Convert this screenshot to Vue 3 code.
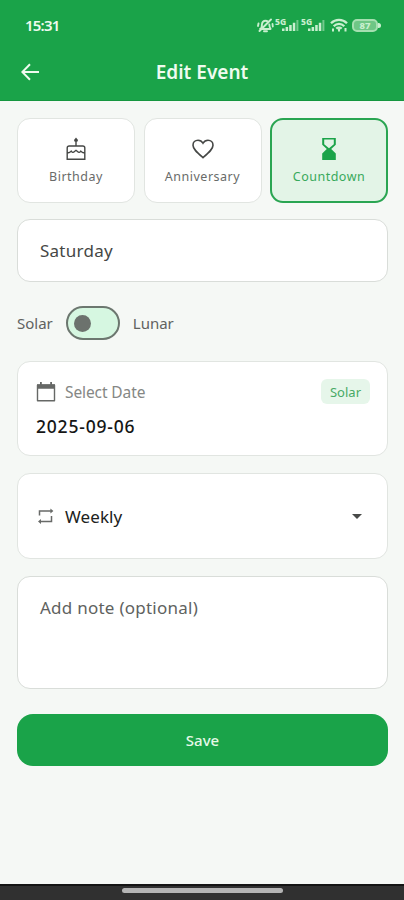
<script setup>
import { ref } from 'vue'

const types = ['Birthday', 'Anniversary', 'Countdown']
const selected = ref('Countdown')
const signals = [0, 1]
</script>

<template>
  <div class="screen">
    <header class="top">
      <div class="status">
        <span class="clock">15:31</span>
        <div class="indicators">
          <svg class="bell" width="17" height="15" viewBox="0 0 17 15" fill="none" stroke="currentColor" stroke-width="1.9" stroke-linecap="round">
            <path d="M3 11h10.500M4 10.500c1-1 .8-2.600.9-4C5.200 4 6.500 2.700 8.500 2.700c1 0 1.700.3 2.300.8M12.300 6.500c.1 1.800.2 3 1.200 4M7 13.200h3M14 1.500 2.500 13M1.500 5.500 1 8M15.500 6l.3 2.500" />
          </svg>
          <div v-for="s in signals" :key="s" class="signal">
            <span class="gen">5G</span>
            <svg width="17" height="11" viewBox="0 0 17 11" fill="currentColor">
              <path d="M0 8.500h2.500V11H0zM3.600 7h2.500v4H3.600zM7.200 5h2.500v6H7.200zM10.800 2.700h2.500V11h-2.500z" />
              <path d="M14.400 0h2v11h-2z" opacity=".5" />
            </svg>
          </div>
          <svg class="wifi" width="18" height="14" viewBox="0 0 18 14" fill="none" stroke="currentColor" stroke-width="2.300">
            <path d="M1 5.200c4.500-4.500 11.500-4.500 16 0M3.700 8.200c3-3 7.600-3 10.600 0M6.300 10.700c1.500-1.400 3.900-1.400 5.400 0" />
            <path d="M9 10.500v3M3 10.500V13.500M15.500 10v3.500" stroke-width="2" />
          </svg>
          <div class="battery"><span>87</span></div>
        </div>
      </div>
      <div class="appbar">
        <svg class="back" width="18" height="18" viewBox="0 0 18 18" fill="none" stroke="currentColor" stroke-width="2">
          <path d="M18 9H2M9 1.200 1.300 9 9 16.800" />
        </svg>
        <h1>Edit Event</h1>
      </div>
    </header>

    <main>
      <div class="types">
        <button v-for="t in types" :key="t" class="card type" :class="{ active: t === selected }" @click="selected = t">
          <svg v-if="t === 'Birthday'" width="20" height="24" viewBox="0 0 20 24" fill="none" stroke="currentColor" stroke-width="1.400">
            <path d="M10 4.500V9M1.200 22.200V11q0-2 2-2h13.600q2 0 2 2v11.200zM1.200 15.500c1.800 1 3-.3 4-1.400 1 1.200 2 1.800 3 .7L10 13.300l1.800 1.500c1 1.100 2 .5 3-.7 1 1.100 2.200 2.400 4 1.400" />
            <path d="M10 .4 12 3A2 2 0 1 1 8 3z" fill="currentColor" stroke="none" />
          </svg>
          <svg v-else-if="t === 'Anniversary'" width="24" height="24" viewBox="0 0 24 24" fill="none" stroke="currentColor" stroke-width="1.600">
            <path d="M12 20.600C5.800 15.200 2 12 2 8.200 2 5.400 4.200 3.200 7 3.200c2 0 3.900 1.100 5 3 1.100-1.900 3-3 5-3 2.800 0 5 2.200 5 5 0 3.800-3.800 7-10 12.400z" />
          </svg>
          <svg v-else width="24" height="24" viewBox="0 0 24 24" fill="currentColor">
            <path d="M5.200 1h13.600v6.800L14.200 12l4.600 4.500V23H5.200v-6.500L9.800 12 5.200 7.800zm2 1.600v4.600L12 11.300l4.800-4.100V2.600z" fill-rule="evenodd" />
          </svg>
          <span>{{ t }}</span>
        </button>
      </div>

      <div class="card field title">Saturday</div>

      <div class="calendar">
        <span>Solar</span>
        <div class="switch"><i></i></div>
        <span>Lunar</span>
      </div>

      <div class="card date">
        <div class="date-head">
          <svg width="20" height="20" viewBox="0 0 20 20" fill="none" stroke="currentColor" stroke-width="1.400">
            <path d="M1.500 3.200h17v15.600h-17z" stroke-linejoin="round" />
            <path d="M1 2.200h18v4.600H1zM4 0h1.800v3H4zM14.200 0H16v3h-1.800z" fill="currentColor" stroke="none" />
          </svg>
          <span class="label">Select Date</span>
          <span class="tag">Solar</span>
        </div>
        <div class="value">2025-09-06</div>
      </div>

      <div class="card repeat">
        <svg width="18" height="18" viewBox="0 0 18 18" fill="none" stroke="currentColor" stroke-width="1.500">
          <path d="M2.500 8.500V4H14.500M14.500 9v5.500H3" />
          <path d="M13.400 1.500l3 2.500-3 2.500zM4 12l-3 2.500 3 2.500z" fill="currentColor" stroke="none" />
        </svg>
        <span>Weekly</span>
        <svg class="caret" width="10" height="5" viewBox="0 0 10 5" fill="currentColor"><path d="M0 0h10L5 5z" /></svg>
      </div>

      <div class="card field note">Add note (optional)</div>

      <button class="save">Save</button>
    </main>

    <footer><i></i></footer>
  </div>
</template>

<style>
body {
  margin: 0;
}
</style>

<style scoped>
.screen {
  box-sizing: border-box;
  width: 404px;
  height: 900px;
  display: flex;
  flex-direction: column;
  overflow: hidden;
  background: #f5f8f5;
  color: #454745;
  font-family: "Noto Sans", sans-serif;
}
.screen * {
  box-sizing: border-box;
}
svg {
  display: block;
  flex: none;
}
button {
  font: inherit;
  color: inherit;
  padding: 0;
}
.top {
  height: 101px;
  flex: none;
  background: #1aa349;
  color: #effbef;
  border-bottom: 1px solid #15963f;
}
.status {
  height: 50px;
  padding: 0 24px 0 25px;
  display: flex;
  align-items: center;
  justify-content: space-between;
}
.clock {
  font-size: 15px;
  font-weight: 600;
  letter-spacing: -0.8px;
}
.indicators {
  display: flex;
  align-items: center;
  color: #c9efcf;
}
.signal {
  width: 26px;
  height: 14px;
  display: flex;
  align-items: flex-end;
  justify-content: flex-end;
  position: relative;
  padding-bottom: 1px;
}
.signal + .wifi {
  margin-left: 5px;
}
.bell {
  margin-right: -1px;
}
.gen {
  position: absolute;
  left: 2px;
  top: -1px;
  font-size: 8.500px;
  line-height: 9px;
  font-weight: 800;
}
.battery {
  width: 26px;
  height: 13px;
  margin-left: 4px;
  margin-right: 2px;
  border: 2px solid #a5dfb0;
  border-radius: 5px;
  background: #6ec685;
  display: flex;
  align-items: center;
  justify-content: center;
  font-size: 9.500px;
  line-height: 9px;
  font-weight: 800;
  position: relative;
}
.battery::after {
  content: "";
  position: absolute;
  right: -5px;
  top: 2px;
  width: 3px;
  height: 5px;
  border-radius: 0 3px 3px 0;
  background: #c9efcf;
}
.appbar {
  height: 43px;
  padding: 0 21px;
  display: grid;
  grid-template-columns: 18px 1fr 18px;
  align-items: center;
}
h1 {
  margin: 0;
  text-align: center;
  font-size: 19px;
  line-height: 26px;
  font-weight: 600;
  letter-spacing: 0;
}
main {
  flex: 1;
  padding: 17px 16px 0 17px;
  display: flex;
  flex-direction: column;
}
.card {
  background: #fff;
  border: 1px solid #e1e5e1;
  border-radius: 13px;
  flex: none;
}
.types {
  display: grid;
  grid-template-columns: repeat(3, 118px);
  justify-content: space-between;
}
.type {
  height: 85px;
  display: flex;
  flex-direction: column;
  align-items: center;
  justify-content: center;
  font-size: 12.500px;
  line-height: 18px;
  letter-spacing: 0.5px;
  color: #696b69;
}
.type svg {
  height: 24px;
  margin: 2px 0 7px;
  color: #454745;
}
.type.active {
  background: #e3f4e7;
  border: 2px solid #2aa552;
  color: #38a95b;
}
.type.active svg {
  color: #1aa349;
}
.field {
  font-size: 17px;
  line-height: 24px;
  letter-spacing: 0.25px;
  border: 1.500px solid #d9ddd9;
}
.title {
  height: 63px;
  margin-top: 16px;
  padding: 19px 22px;
}
.calendar {
  height: 34px;
  margin-top: 24px;
  display: flex;
  align-items: center;
  gap: 13px;
  font-size: 15px;
  color: #606260;
}
.switch {
  width: 54px;
  height: 34px;
  border: 2px solid #6c776f;
  border-radius: 17px;
  background: #d6f7e1;
  padding: 7px 6px;
}
.switch i {
  display: block;
  width: 17px;
  height: 17px;
  border-radius: 50%;
  background: #6c726d;
}
.date {
  height: 95px;
  margin-top: 21px;
  padding: 17px 17px 0 18px;
}
.date-head {
  display: flex;
  align-items: center;
  height: 25px;
  color: #666866;
}
.label {
  margin-left: 9px;
  font-size: 15.500px;
  letter-spacing: -0.1px;
  color: #858785;
}
.tag {
  margin-left: auto;
  width: 49px;
  height: 25px;
  line-height: 26px;
  text-align: center;
  border-radius: 6px;
  background: #e6f6ea;
  color: #48aa66;
  font-size: 13px;
}
.value {
  margin-top: 10px;
  font-size: 17.500px;
  line-height: 24px;
  font-weight: 500;
  letter-spacing: 0.8px;
  color: #151615;
}
.repeat {
  height: 86px;
  margin-top: 17px;
  padding: 0 25px 0 19px;
  display: flex;
  align-items: center;
  font-size: 17px;
  letter-spacing: 0.1px;
  color: #202220;
}
.repeat svg {
  color: #686a68;
}
.repeat span {
  margin-left: 10px;
}
.repeat .caret {
  margin-left: auto;
  color: #484a48;
}
.note {
  height: 113px;
  margin-top: 17px;
  padding: 19px 22px;
  color: #606260;
}
.save {
  height: 52px;
  margin-top: 25px;
  border: 0;
  border-radius: 16px;
  background: #1aa349;
  color: #e5f8e7;
  font-size: 15px;
  font-weight: 500;
}
footer {
  height: 16px;
  flex: none;
  background: #303030;
  border-top: 2px solid #141414;
  display: flex;
  justify-content: center;
  padding-top: 2px;
}
footer i {
  width: 161px;
  height: 5px;
  border-radius: 3px;
  background: #b4b4b4;
}
</style>
